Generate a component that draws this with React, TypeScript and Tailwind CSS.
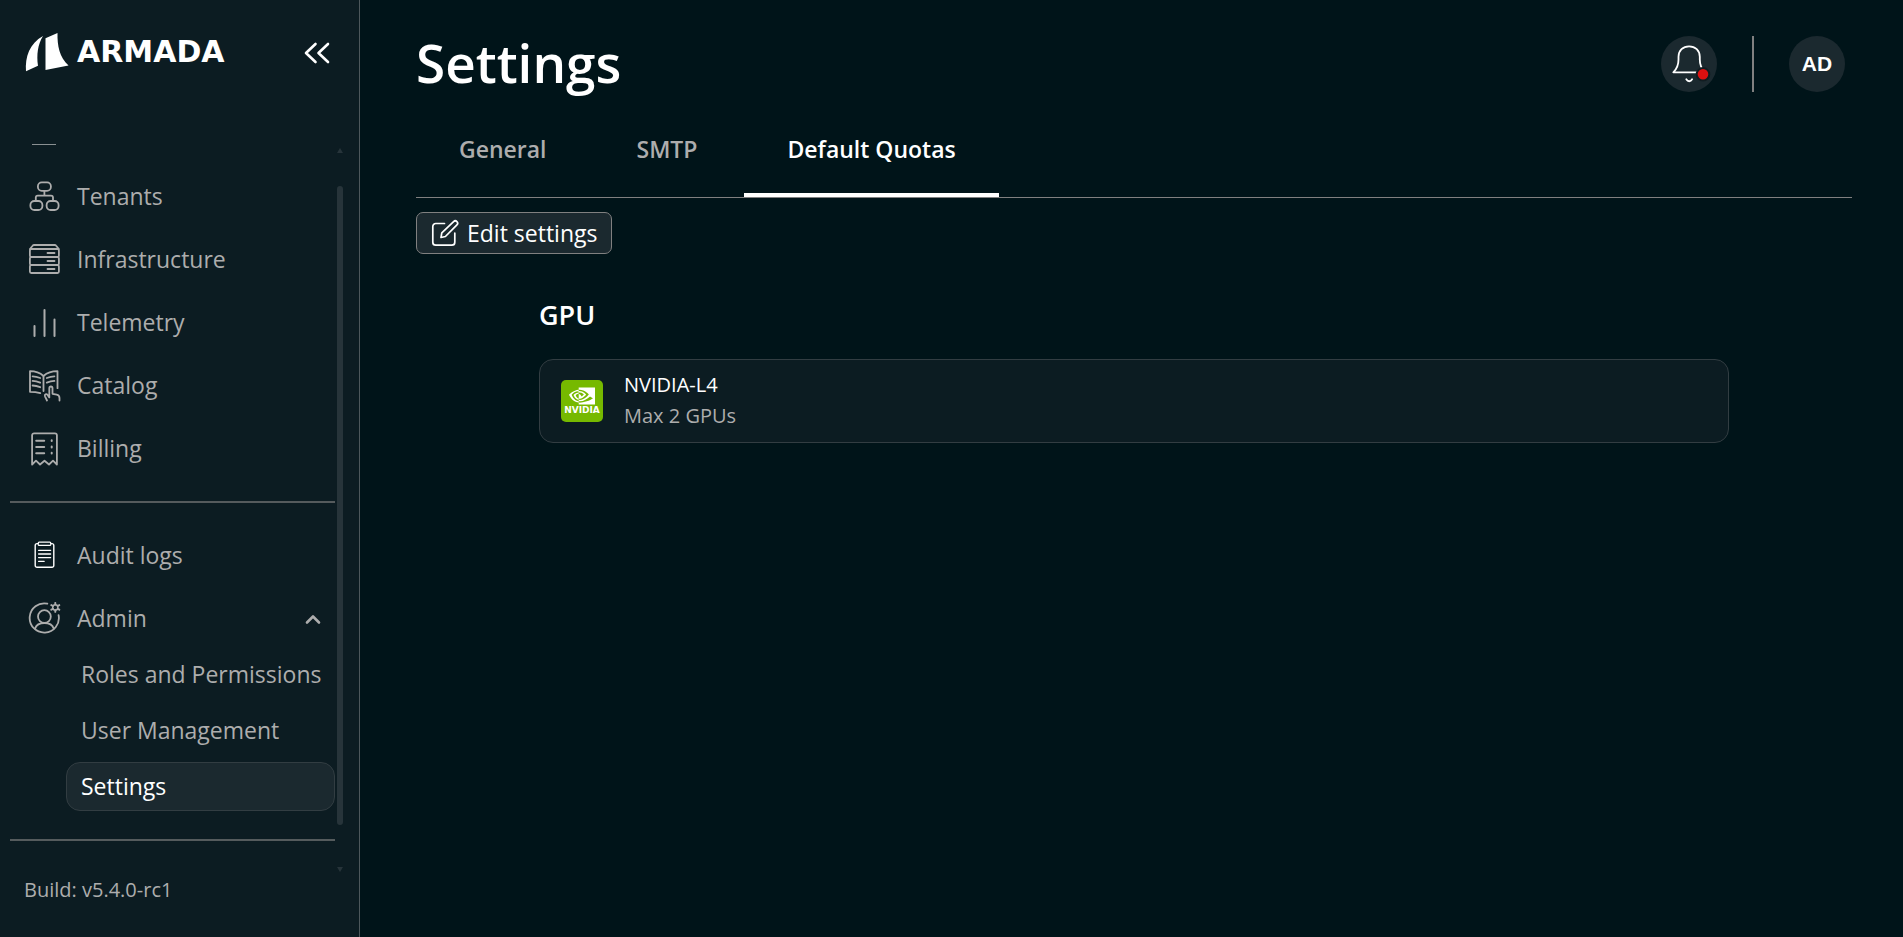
import React, { useState } from 'react';
import { SiNvidia } from 'react-icons/si';

type IconProps = { children: React.ReactNode; className?: string };

const NavIcon: React.FC<IconProps> = ({ children, className = '' }) => (
  <svg
    viewBox="0 1 33 34"
    className={`h-[34px] w-[33px] shrink-0 ${className}`}
    fill="none"
    stroke="currentColor"
    strokeWidth="1.8"
    strokeLinecap="round"
    strokeLinejoin="round"
    aria-hidden="true"
  >
    {children}
  </svg>
);

const TenantsIcon = () => (
  <NavIcon>
    <rect x="9.9" y="3.4" width="13" height="8.4" rx="3.8" />
    <path d="M16.4 12v4.600M7.8 21v-2.400a2 2 0 0 1 2-2H23a2 2 0 0 1 2 2V21" />
    <rect x="2.4" y="22" width="12" height="9" rx="4" />
    <rect x="18.6" y="22" width="12" height="9" rx="4" />
  </NavIcon>
);

const InfrastructureIcon = () => (
  <NavIcon>
    <path d="M2 7l2.6-3.2a2 2 0 0 1 1.6-.8h20.4a2 2 0 0 1 1.6.8L30.8 7" />
    <rect x="1.9" y="7" width="29" height="8" rx="1.4" />
    <rect x="1.9" y="15" width="29" height="8" rx="1.4" />
    <rect x="1.9" y="23" width="29" height="8" rx="1.4" />
    <path d="M19.500 11h7M19.500 19h7M19.500 27h7" />
  </NavIcon>
);

const TelemetryIcon = () => (
  <NavIcon>
    <path d="M6.500 21v10M16.500 5v26M26.500 14.500V31" strokeWidth="2" />
  </NavIcon>
);

const CatalogIcon = () => (
  <NavIcon>
    <path d="M15.500 8C11.500 4.400 7 3.200 2 3.200v20.600c3.600 0 6.600.3 10.300 1.300" />
    <path d="M15.500 8C19.500 4.400 24 3.200 29.500 3.200v17M15.500 8v15" />
    <path d="M4.600 8.300c2.600 0 5 .6 7.600 1.700M4.600 12.900c2.600 0 5 .6 7.600 1.700M4.600 17.500c2.600 0 5 .6 7.600 1.700M18.800 10c2.600-1.100 5-1.700 7.600-1.700M18.800 14.600c2.600-1.100 5-1.700 7.600-1.700" />
    <path d="M19 32.500l-2-4.200c-.8-1.900 1.400-3 2.600-1.300l1.700 2.400v-9.200c0-2.300 3.200-2.300 3.200 0v5.600l4.200.9c1.800.4 2.800 1.600 2.800 3.400v2.400" />
  </NavIcon>
);

const BillingIcon = () => (
  <NavIcon>
    <path d="M4.100 33.500V4.300a2 2 0 0 1 2-2h20.800a2 2 0 0 1 2 2v29.200l-3.900-3.800-4 3.800-4.500-3.800-4.500 3.800-4-3.800z" />
    <path d="M8.200 9.800h8M8.200 16h8M8.200 22.200h8M23.700 9.300v.8M23.700 15.600v.8M23.700 21.800v.8" strokeWidth="2" />
  </NavIcon>
);

const AuditIcon = () => (
  <NavIcon className="text-white">
    <path d="M10 5.600H9a1.800 1.800 0 0 0-1.800 1.800v20a1.800 1.800 0 0 0 1.800 1.800h15a1.800 1.800 0 0 0 1.800-1.800v-20A1.800 1.800 0 0 0 24 5.600h-1" strokeWidth="1.400" />
    <rect x="10.200" y="4.200" width="12.600" height="3.200" rx="1" strokeWidth="1.200" />
    <path d="M10.600 12.300h12M10.600 16h12M10.600 19.600h12M10.600 23.300h5.600" strokeWidth="1.300" />
  </NavIcon>
);

const AdminIcon = () => (
  <NavIcon>
    <path d="M19.300 2.700A14.600 14.600 0 1 0 30.600 14.200" />
    <circle cx="16.400" cy="15.600" r="6.400" />
    <path d="M7 27.700c1.200-3.600 4.600-5.700 9.400-5.700s8.200 2.100 9.400 5.700" />
    <circle cx="27.300" cy="6.400" r="2.600" strokeWidth="1.500" />
    <path d="M27.300 3.600V1.900M27.300 10.900V9.200M24.900 5l-1.600-.9M31.300 8.700l-1.600-.9M24.900 7.800l-1.600.9M31.300 4.100l-1.600.9" strokeWidth="1.900" />
  </NavIcon>
);

const mainNav = [
  { label: 'Tenants', Icon: TenantsIcon },
  { label: 'Infrastructure', Icon: InfrastructureIcon },
  { label: 'Telemetry', Icon: TelemetryIcon },
  { label: 'Catalog', Icon: CatalogIcon },
  { label: 'Billing', Icon: BillingIcon },
];

const adminNav = ['Roles and Permissions', 'User Management', 'Settings'];

const tabs = ['General', 'SMTP', 'Default Quotas'];

const rowClass = 'flex h-[63px] w-full items-center gap-4 pl-[18px] pr-[14px] text-left hover:text-white';

const Sidebar = () => {
  const [adminOpen, setAdminOpen] = useState(true);

  return (
    <aside className="flex w-[360px] shrink-0 flex-col border-r border-[#4d575b] bg-[#0c1c22] text-[#adadad]">
      <div className="flex h-36 shrink-0 items-start justify-between pl-[25px] pr-[29px] pt-8 text-white">
        <a href="#" className="flex items-center gap-2" aria-label="Armada home">
          <svg viewBox="0 0 44 40" className="h-10 w-11" fill="currentColor" aria-hidden="true">
            <path d="M1 39.300C0 25 4.500 11.500 18 4c-5.300 8.500-6.500 19-5 29.800z" />
            <path d="M20.500 6.200L32.500 1c-.3 13 2 24 11 32.600L20.500 38z" />
          </svg>
          <span className="font-['DejaVu_Sans'] text-[30px] font-bold leading-10">ARMADA</span>
        </a>
        <button type="button" aria-label="Collapse sidebar" className="mt-2">
          <svg viewBox="0 0 26 26" className="h-[26px] w-[26px]" fill="none" stroke="currentColor" strokeWidth="2.600" strokeLinecap="round" strokeLinejoin="round">
            <path d="M11.500 4L2 13l9.500 9M24 4l-9.500 9 9.500 9" />
          </svg>
        </button>
      </div>

      <div className="flex min-h-0 flex-1 justify-between pr-4">
        <nav className="min-w-0 flex-1 overflow-hidden pl-[10px] text-[23px]">
          {/* Bottom edge of the row scrolled out of view */}
          <div className="h-[21px] pl-[22px]">
            <div className="h-px w-6 bg-[#8a9092]" />
          </div>
          {mainNav.map(({ label, Icon }) => (
            <a key={label} href="#" className={rowClass}>
              <Icon />
              {label}
            </a>
          ))}
          <hr className="my-[21px] border-t-2 border-[#555b5d]" />
          <a href="#" className={rowClass}>
            <AuditIcon />
            Audit logs
          </a>
          <button type="button" className={rowClass} aria-expanded={adminOpen} onClick={() => setAdminOpen(!adminOpen)}>
            <AdminIcon />
            <span className="flex-1">Admin</span>
            <svg viewBox="0 0 16 12" className={`h-3 w-4 ${adminOpen ? '' : 'rotate-180'}`} fill="none" stroke="currentColor" strokeWidth="2.600" strokeLinecap="round" strokeLinejoin="round">
              <path d="M2 9.500l6-6 6 6" />
            </svg>
          </button>
          {adminOpen && (
            <div className="flex flex-col gap-[7px] pl-14">
              {adminNav.map((label) => (
                <a
                  key={label}
                  href="#"
                  className={`flex h-[49px] items-center whitespace-nowrap rounded-[14px] border pl-[14px] ${
                    label === 'Settings' ? 'border-[#323d42] bg-[#1b292f] text-white' : 'border-transparent hover:text-white'
                  }`}
                >
                  {label}
                </a>
              ))}
            </div>
          )}
          <hr className="mt-7 border-t-2 border-[#555b5d]" />
        </nav>

        {/* Scrollbar */}
        <div className="ml-[2px] flex w-[6px] flex-col justify-between pb-1 pt-1" aria-hidden="true">
          <svg viewBox="0 0 6 5" className="h-[5px] w-[6px] fill-[#27343a]"><path d="M3 0l3 5H0z" /></svg>
          <div className="mb-[42px] mt-[33px] flex-1 rounded-full bg-[#27343a]" />
          <svg viewBox="0 0 6 5" className="h-[5px] w-[6px] fill-[#27343a]"><path d="M0 0h6L3 5z" /></svg>
        </div>
      </div>

      <p className="h-[61px] shrink-0 pl-6 text-[20px] leading-7">Build: v5.4.0-rc1</p>
    </aside>
  );
};

const Header = () => (
  <header className="flex items-start justify-between pr-[7px]">
    <h1 className="text-[53px] font-semibold leading-[70px]">Settings</h1>
    <div className="mt-2 flex items-center gap-[35px]">
      <button type="button" aria-label="Notifications" className="h-14 w-14 rounded-full bg-[#1b292f]">
        <svg viewBox="0 0 56 56" className="h-14 w-14" fill="none" stroke="white" strokeWidth="1.800" strokeLinecap="round" strokeLinejoin="round">
          <path d="M12.300 36.300c3.700-3.400 5.200-7.500 5.200-12.800V20.800C17.500 14.500 22 10.300 28.100 10.300S38.800 14.500 38.800 20.800v2.700c0 5.300 1.500 9.400 5.200 12.800z" />
          <path d="M25.300 43.200c1.500 2.700 4.300 2.700 5.800 0" />
          <circle cx="42" cy="38.300" r="6.300" fill="#dd1010" stroke="#111d22" strokeWidth="2" />
        </svg>
      </button>
      <div className="h-14 w-[2px] bg-[#808080]" />
      <button type="button" aria-label="Account" className="h-14 w-14 rounded-full bg-[#1b292f] font-['Liberation_Sans'] text-[21px] font-bold">
        AD
      </button>
    </div>
  </header>
);

const QuotaCard = ({ name, max }: { name: string; max: number }) => (
  <div className="flex h-[84px] items-center gap-[21px] rounded-[14px] border border-[#323d42] bg-[#0c1c22] px-[21px]">
    <div className="flex h-[42px] w-[42px] flex-col items-center rounded-[5px] bg-[#76b900] pt-[3px] text-white">
      <SiNvidia size={26} aria-hidden="true" />
      <span className="-mt-1 font-['DejaVu_Sans'] text-[9px] font-bold leading-[11px]">NVIDIA</span>
    </div>
    <div className="pb-[2px] text-[20px] leading-[31px]">
      <p>{name}</p>
      <p className="text-[#adadad]">Max {max} GPUs</p>
    </div>
  </div>
);

const App = () => {
  const [activeTab, setActiveTab] = useState('Default Quotas');

  return (
    <div className="flex h-screen bg-[#001419] font-['Open_Sans','Noto_Sans',sans-serif] text-white">
      <Sidebar />
      <main className="min-w-0 flex-1 overflow-auto pl-14 pr-[51px] pt-7">
        <Header />

        <div role="tablist" className="mt-[26px] flex gap-1 border-b border-[#808080]">
          {tabs.map((tab) => (
            <button
              key={tab}
              type="button"
              role="tab"
              aria-selected={activeTab === tab}
              onClick={() => setActiveTab(tab)}
              className={`flex h-[73px] border-b-4 px-[43px] pt-2 text-[23px] font-semibold leading-[34px] ${
                activeTab === tab ? 'border-white text-white' : 'border-transparent text-[#adadad]'
              }`}
            >
              {tab}
            </button>
          ))}
        </div>

        <button type="button" className="mt-[14px] flex h-[42px] items-center gap-2 rounded-[7px] border border-[#808080] bg-[#1b292f] px-[14px] text-[23px]">
          <svg viewBox="0 0 28 28" className="h-7 w-7" fill="none" stroke="currentColor" strokeWidth="1.700" strokeLinecap="round" strokeLinejoin="round" aria-hidden="true">
            <path d="M13.500 4.500H4.800a3 3 0 0 0-3 3v15.700a3 3 0 0 0 3 3h16a3 3 0 0 0 3-3v-9" />
            <path d="M10 18.500l.8-4.600L22.600 2.600a2.300 2.300 0 0 1 3.300 3.300L14.400 17.500z" />
          </svg>
          Edit settings
        </button>

        <section className="mx-auto mt-10 max-w-[1190px]">
          <h2 className="mb-6 text-[27px] font-semibold leading-[41px]">GPU</h2>
          <QuotaCard name="NVIDIA-L4" max={2} />
        </section>
      </main>
    </div>
  );
};

export default App;
